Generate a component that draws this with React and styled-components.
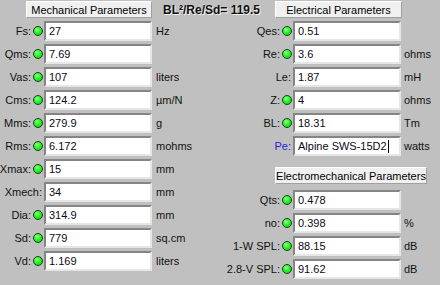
import React from "react";
import styled, { createGlobalStyle } from "styled-components";

const Global = createGlobalStyle`
  html, body { margin: 0; padding: 0; background: #c0c0c0; }
  * { box-sizing: border-box; }
`;

const Panel = styled.div`
  width: 440px;
  height: 285px;
  background: #c0c0c0;
  font-family: "Liberation Sans", Arial, sans-serif;
  font-size: 11px;
  color: #000;
  overflow: hidden;
`;

const Header = styled.div`
  display: grid;
  grid-template-columns: 220px 220px;
  height: 18px;
  padding-top: 1px;
`;

const HeaderCell = styled.div`
  display: flex;
  align-items: center;
  padding-left: ${(p) => p.$indent}px;
  white-space: nowrap;
`;

const SectionButton = styled.div`
  width: ${(p) => p.$w}px;
  height: 17px;
  flex: none;
  display: flex;
  align-items: center;
  justify-content: center;
  background: #f0f0f0;
  border-top: 1px solid #ffffff;
  border-left: 1px solid #ffffff;
  border-right: 1px solid #a0a0a0;
  border-bottom: 1px solid #a0a0a0;
  font-size: 11px;
  color: #000;
  margin-left: ${(p) => p.$ml || 0}px;
  margin-top: ${(p) => p.$mt || 0}px;
  margin-bottom: ${(p) => p.$mb || 0}px;
`;

const Ratio = styled.div`
  margin-left: 11px;
  font-weight: bold;
  font-size: 12px;
  color: #111;
  text-shadow: 1px 1px 0 #f4f4f4;
`;

const Columns = styled.div`
  display: grid;
  grid-template-columns: 220px 220px;
  padding-top: 3px;
`;

const Column = styled.div`
  display: flex;
  flex-direction: column;
  gap: 3px;
`;

const Row = styled.div`
  display: grid;
  grid-template-columns: ${(p) => p.$labelW}px 108px auto;
  height: 20px;
  align-items: center;
`;

const LabelArea = styled.div`
  display: flex;
  justify-content: flex-end;
  align-items: center;
  padding-right: 1px;
  white-space: nowrap;
`;

const Label = styled.span`
  color: ${(p) => (p.$blue ? "#2424d6" : "#111")};
  padding-right: 1px;
`;

const Led = styled.span`
  width: 10px;
  height: 10px;
  margin-left: 1px;
  border-radius: 50%;
  border: 1px solid #1f3a1f;
  background: radial-gradient(circle at 40% 35%, #b0ffb0 0%, #22ff22 40%, #00c800 100%);
  flex: none;
`;

const ValueBox = styled.div`
  height: 20px;
  width: 108px;
  background: #fff;
  border-top: 2px solid #858585;
  border-left: 2px solid #858585;
  border-right: 2px solid #e6e6e6;
  border-bottom: 2px solid #e6e6e6;
  padding-left: 3px;
  display: flex;
  align-items: center;
  white-space: nowrap;
  overflow: hidden;
  color: #0a0a1a;
`;

const Caret = styled.span`
  display: inline-block;
  width: 1px;
  height: 13px;
  background: #000;
  margin-left: 1px;
`;

const Unit = styled.span`
  padding-left: ${(p) => p.$pl}px;
  color: #111;
  white-space: nowrap;
`;

const mech = [
  ["Fs:", true, "27", "Hz"],
  ["Qms:", true, "7.69", ""],
  ["Vas:", true, "107", "liters"],
  ["Cms:", true, "124.2", "µm/N"],
  ["Mms:", true, "279.9", "g"],
  ["Rms:", true, "6.172", "mohms"],
  ["Xmax:", true, "15", "mm"],
  ["Xmech:", false, "34", "mm"],
  ["Dia:", true, "314.9", "mm"],
  ["Sd:", true, "779", "sq.cm"],
  ["Vd:", true, "1.169", "liters"],
];

const elec = [
  ["Qes:", true, "0.51", ""],
  ["Re:", true, "3.6", "ohms"],
  ["Le:", false, "1.87", "mH"],
  ["Z:", true, "4", "ohms"],
  ["BL:", true, "18.31", "Tm"],
];

const electromech = [
  ["Qts:", true, "0.478", ""],
  ["no:", true, "0.398", "%"],
  ["1-W SPL:", true, "88.15", "dB"],
  ["2.8-V SPL:", true, "91.62", "dB"],
];

function Param({ label, led, value, unit, labelW, unitPad, blue, caret }) {
  return (
    <Row $labelW={labelW}>
      <LabelArea>
        <Label $blue={blue}>{label}</Label>
        {led && <Led />}
      </LabelArea>
      <ValueBox>
        {value}
        {caret && <Caret />}
      </ValueBox>
      <Unit $pl={unitPad}>{unit}</Unit>
    </Row>
  );
}

export default function App() {
  return (
    <Panel>
      <Global />
      <Header>
        <HeaderCell $indent={26}>
          <SectionButton $w={126}>Mechanical Parameters</SectionButton>
          <Ratio>BL²/Re/Sd= 119.5</Ratio>
        </HeaderCell>
        <HeaderCell $indent={55}>
          <SectionButton $w={127}>Electrical Parameters</SectionButton>
        </HeaderCell>
      </Header>
      <Columns>
        <Column>
          {mech.map(([l, led, v, u]) => (
            <Param key={l} label={l} led={led} value={v} unit={u} labelW={44} unitPad={4} />
          ))}
        </Column>
        <Column>
          {elec.map(([l, led, v, u]) => (
            <Param key={l} label={l} led={led} value={v} unit={u} labelW={73} unitPad={3} />
          ))}
          <Param label="Pe:" led={false} value="Alpine SWS-15D2" unit="watts" labelW={73} unitPad={3} blue caret />
          <SectionButton $w={152} $ml={55} $mt={8} $mb={3}>Electromechanical Parameters</SectionButton>
          {electromech.map(([l, led, v, u]) => (
            <Param key={l} label={l} led={led} value={v} unit={u} labelW={73} unitPad={3} />
          ))}
        </Column>
      </Columns>
    </Panel>
  );
}
